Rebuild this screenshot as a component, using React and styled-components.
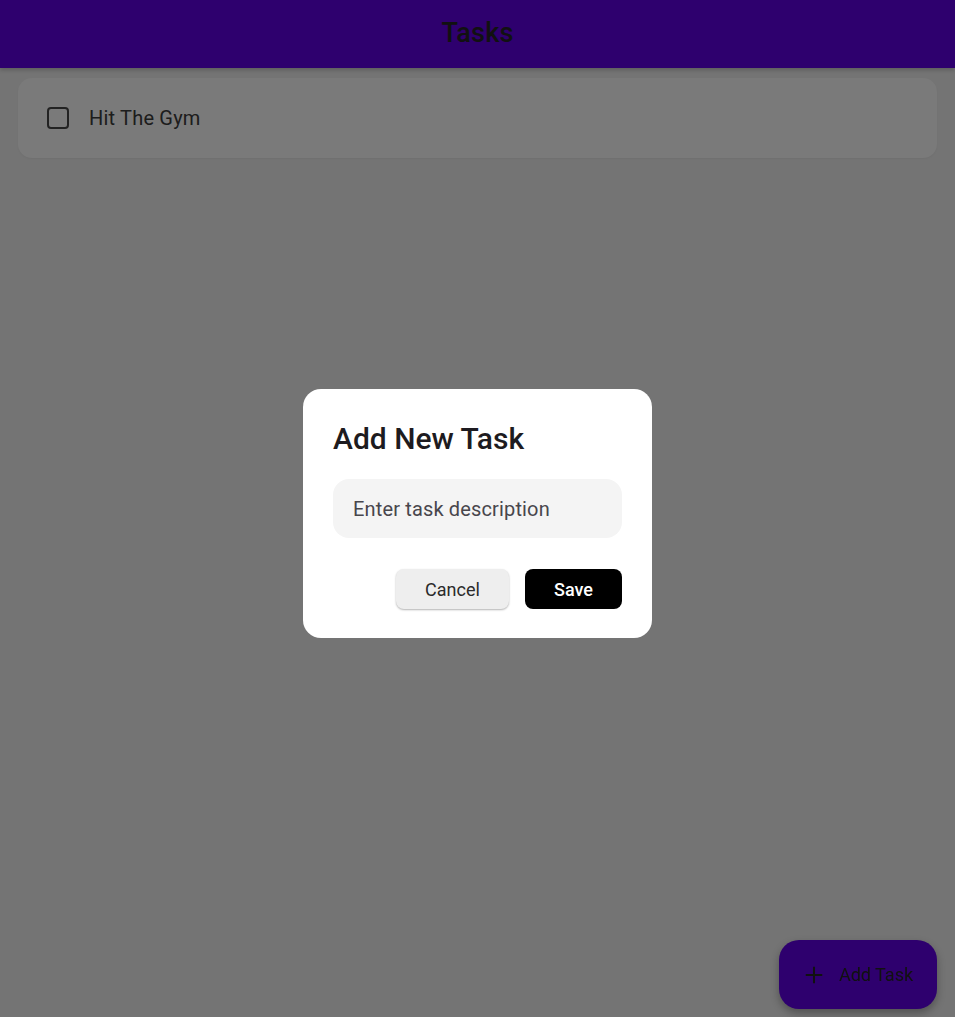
import styled, { createGlobalStyle } from "styled-components";

const GlobalStyle = createGlobalStyle`
    html, body {
        margin: 0;
        padding: 0;
        height: 100%;
    }
    body {
        font-family: Roboto, "Noto Sans", sans-serif;
        background: #e8e8e8;
    }
`

const Page = styled.div`
    min-height: 1017px;
    background: #e8e8e8;
    display: flex;
    flex-direction: column;
`

const Header = styled.header`
    height: 68px;
    background: #5c00dc;
    display: flex;
    align-items: center;
    justify-content: center;
    box-shadow: 0 2px 4px rgba(0, 0, 0, 0.2);
`

const Title = styled.h1`
    margin: 0 0 2px 0;
    font-size: 27px;
    font-weight: 500;
    color: #222;
    letter-spacing: 0.2px;
`

const List = styled.div`
    padding: 10px 18px;
    display: flex;
    flex-direction: column;
    gap: 10px;
`

const Card = styled.div`
    height: 80px;
    background: #f4f4f4;
    border-radius: 14px;
    display: flex;
    align-items: center;
    padding-left: 29px;
    gap: 20px;
    box-shadow: 0 1px 2px rgba(0, 0, 0, 0.04);
`

const Checkbox = styled.span`
    width: 18px;
    height: 18px;
    border: 2.5px solid #444;
    border-radius: 4px;
    display: inline-block;
`

const TaskText = styled.span`
    font-size: 20px;
    color: #3a3a3a;
    letter-spacing: 0.2px;
`

const Fab = styled.button`
    position: fixed;
    right: 18px;
    bottom: 8px;
    width: 158px;
    height: 69px;
    border: none;
    border-radius: 20px;
    background: #5c00dc;
    display: flex;
    align-items: center;
    justify-content: center;
    gap: 14px;
    font-family: Roboto, sans-serif;
    font-size: 18px;
    color: #222;
    box-shadow: 0 4px 8px rgba(0, 0, 0, 0.3);
    padding: 0 22px 0 22px;
`

const Scrim = styled.div`
    position: fixed;
    inset: 0;
    background: rgba(0, 0, 0, 0.5);
    display: flex;
    align-items: center;
    justify-content: center;
`

const Dialog = styled.div`
    width: 349px;
    box-sizing: border-box;
    background: #fff;
    border-radius: 18px;
    padding: 31px 30px 29px 30px;
    display: flex;
    flex-direction: column;
    margin-top: 10px;
`

const DialogTitle = styled.h2`
    margin: 0;
    font-size: 30px;
    font-weight: 500;
    color: #1d1b20;
    line-height: 37px;
`

const Input = styled.input`
    margin-top: 22px;
    height: 59px;
    box-sizing: border-box;
    border: none;
    outline: none;
    border-radius: 16px;
    background: #f4f4f4;
    padding: 0 20px;
    font-family: Roboto, sans-serif;
    font-size: 20px;
    letter-spacing: 0.15px;
    color: #222;

    &::placeholder {
        color: #48464c;
    }
`

const Actions = styled.div`
    margin-top: 31px;
    display: flex;
    justify-content: flex-end;
    gap: 16px;
`

const Button = styled.button`
    height: 40px;
    width: ${p => p.$w}px;
    border: none;
    border-radius: 8px;
    font-family: Roboto, sans-serif;
    font-size: 18px;
    background: ${p => p.$primary ? "#000" : "#eeeeee"};
    color: ${p => p.$primary ? "#fff" : "#2a2a2a"};
    font-weight: ${p => p.$primary ? 500 : 400};
    box-shadow: ${p => p.$primary ? "none" : "0 1px 2px rgba(0, 0, 0, 0.3)"};
`

function Plus() {
    return (
        <svg width="22" height="22" viewBox="0 0 24 24">
            <path d="M12 3v18M3 12h18" stroke="#222" strokeWidth="2.2" fill="none" />
        </svg>
    )
}

export default function App() {
    return (
        <>
            <GlobalStyle />
            <Page>
                <Header>
                    <Title>Tasks</Title>
                </Header>
                <List>
                    <Card>
                        <Checkbox />
                        <TaskText>Hit The Gym</TaskText>
                    </Card>
                </List>
                <Fab>
                    <Plus />
                    Add Task
                </Fab>
            </Page>
            <Scrim>
                <Dialog>
                    <DialogTitle>Add New Task</DialogTitle>
                    <Input placeholder="Enter task description" />
                    <Actions>
                        <Button $w={113}>Cancel</Button>
                        <Button $w={97} $primary>Save</Button>
                    </Actions>
                </Dialog>
            </Scrim>
        </>
    )
}
